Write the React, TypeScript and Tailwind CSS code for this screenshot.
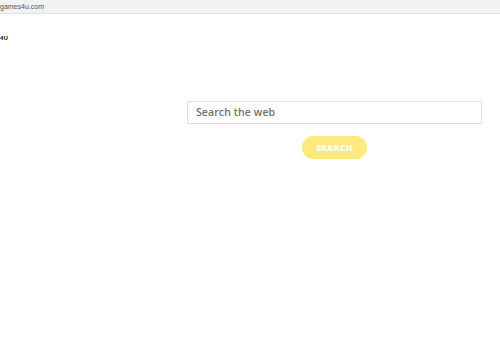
import React from "react";

const App: React.FC = () => {
  return (
    <div className="w-[500px] h-[350px] bg-white" style={{ fontFamily: "'Open Sans', sans-serif" }}>
      {/* Address bar */}
      <div className="h-[14px] bg-[#f1f2f4] border-b border-[#e2e3e5] flex items-center">
        <span className="text-[7px] leading-none text-[#555] font-['Liberation_Sans',sans-serif]">games4u.com</span>
      </div>

      {/* Logo */}
      <div className="pt-[21px] text-[6px] font-bold leading-none text-[#222]">4U</div>

      {/* Search */}
      <div className="ml-[187px] mt-[60px] w-[295px]">
        <div className="h-[23px] border border-[#dedede] flex items-center pl-[8px]">
          <span className="text-[10.5px] font-semibold text-[#707070] tracking-[0.1px]">Search the web</span>
        </div>
        <div className="flex pt-[12px] pl-[115px]">
          <button className="w-[65px] h-[23px] rounded-full bg-[#ffe97f] text-white text-[9px] font-extrabold tracking-[0.2px] flex items-center justify-center">
            SEARCH
          </button>
        </div>
      </div>
    </div>
  );
};

export default App;
